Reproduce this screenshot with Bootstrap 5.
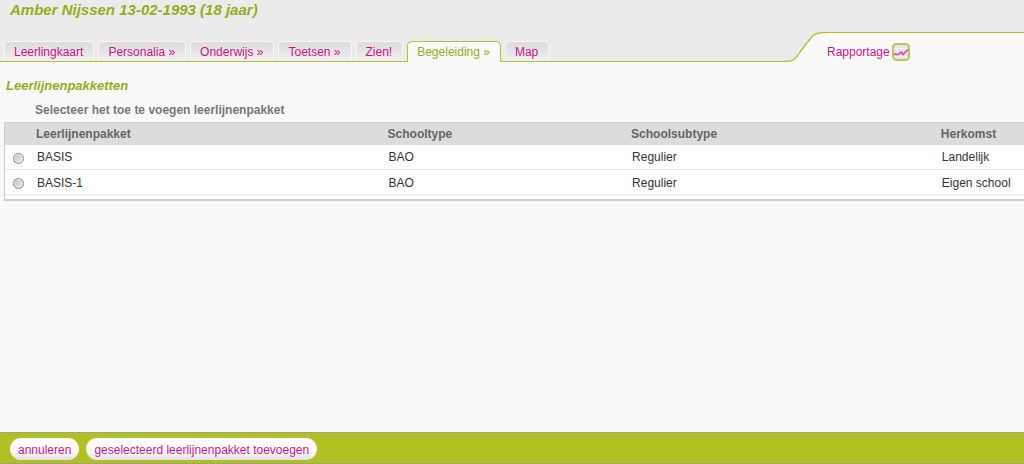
<!DOCTYPE html>
<html lang="nl">
<head>
<meta charset="utf-8">
<meta name="viewport" content="width=device-width, initial-scale=1">
<title>Leerlijnenpakketten</title>
<link href="https://cdn.jsdelivr.net/npm/bootstrap@5.3.0/dist/css/bootstrap.min.css" rel="stylesheet">
<style>
  :root { --olive: #98ab1c; --lime: #b1c32b; --pink: #c8148c; }
  body { font: 12px/16px "Liberation Sans", Arial, sans-serif; background: #f9f9f9; color: #333; }
  .pupil-head { background: #ebebeb; }
  .pupil-name { font-size: 15px; line-height: 20px; font-weight: bold; font-style: italic; color: var(--olive); height: 32px; padding-left: 10px; }
  .tab-strip { height: 30px; }
  .tab-list { border-bottom: 1px solid var(--lime); padding-left: 4px; gap: 4px; --bs-nav-link-padding-y: 0; }
  .tab-list .nav-link { height: 20px; padding: 2px 10px 0 9px; border: 1px solid #f6f6f6; border-bottom: 0; border-radius: 5px 5px 0 0; background: linear-gradient(#dcdcdc, #efefef); color: var(--pink); }
  .tab-list .nav-link.active { height: 21px; margin-bottom: -1px; border-color: var(--lime); background: #f9f9f9; color: var(--olive); }
  .report { width: 197px; border-top: 1px solid var(--lime); background: #f9f9f9; padding-top: 10px; }
  .report a { color: var(--pink); gap: 2px; }
  .page-title { font-size: 13px; line-height: 18px; font-weight: bold; font-style: italic; color: var(--olive); margin: 15px 0 0 6px; }
  .hint { font-weight: bold; color: #777; margin: 7px 0 4px 35px; }
  .packages { border: solid #ccc; border-width: 1px 0 2px 1px; background: #fff; margin-left: 4px; padding-bottom: 4px; }
  .packages table { table-layout: fixed; }
  .packages th { background: #dcdcdc; color: #666; padding: 3px 5px; }
  .packages td { padding: 4px 6px; border-bottom: 1px solid #e8e8e8; }
  .packages tr:last-child td { padding-top: 5px; padding-bottom: 3px; }
  .packages .pick { width: 26px; padding: 0; }
  .packages tbody .pick, .packages tbody tr:last-child .pick { padding: 2px 0 0 8px; }
  .pick input { appearance: none; display: block; width: 11px; height: 11px; margin: 0; border: 1px solid #8c8c8c; border-radius: 50%; background: linear-gradient(135deg, #bbb, #f4f4f4); box-shadow: inset 0 0 0 1px #eee; }
  .pick input:checked { background: radial-gradient(#444 35%, #eee 40%); }
  .actions { background: #b1c024; border: solid #a0a575; border-width: 1px 0; height: 32px; gap: 7px; padding: 1px 10px 0; }
  .actions .btn { font-size: 12px; line-height: 16px; padding: 4px 8px 2px; border: 0; border-radius: 11px; color: var(--pink); background: linear-gradient(#fff 50%, #e2e2e2); }
</style>
</head>
<body class="d-flex flex-column min-vh-100">
<header class="pupil-head">
  <div class="pupil-name">Amber Nijssen 13-02-1993 (18 jaar)</div>
  <div class="tab-strip d-flex">
    <nav class="tab-list nav flex-grow-1 flex-nowrap align-items-end" aria-label="Leerling">
      <a class="nav-link" href="#">Leerlingkaart</a>
      <a class="nav-link" href="#">Personalia »</a>
      <a class="nav-link" href="#">Onderwijs »</a>
      <a class="nav-link" href="#">Toetsen »</a>
      <a class="nav-link" href="#">Zien!</a>
      <a class="nav-link active" aria-current="page" href="#">Begeleiding »</a>
      <a class="nav-link" href="#">Map</a>
    </nav>
    <svg class="flex-shrink-0" width="45" height="30" viewBox="0 0 45 30" aria-hidden="true">
      <path d="M0 29.5H4C12 29.5 14 26 18 20L28 7C32 2 35 .5 42 .5H45V30H0Z" fill="#f9f9f9"/>
      <path d="M0 29.5H4C12 29.5 14 26 18 20L28 7C32 2 35 .5 42 .5H45" fill="none" stroke="#b1c32b" stroke-width="1.3"/>
    </svg>
    <div class="report flex-shrink-0">
      <a class="d-inline-flex align-items-center text-decoration-none" href="#">Rapportage
        <svg width="18" height="18" viewBox="0 0 18 18" aria-hidden="true">
          <rect x="1" y="1" width="16" height="16" rx="3.500" fill="#eadfe6" stroke="#b9c75a" stroke-width="2"/>
          <path d="M5.500 2V16M9.500 2V16M13.500 2V16M2 5.500H16M2 13.500H16" stroke="#f6f0f4" fill="none"/>
          <path d="M2 10.500L3.500 11.500H6.500L9 9L11 11.500L16 6.500" fill="none" stroke="#c4559b" stroke-width="1.600"/>
        </svg>
      </a>
    </div>
  </div>
</header>
<main class="flex-grow-1">
  <h1 class="page-title">Leerlijnenpakketten</h1>
  <p class="hint">Selecteer het toe te voegen leerlijnenpakket</p>
  <div class="packages">
    <table class="w-100">
      <colgroup><col style="width:26px"><col style="width:34.500%"><col style="width:23.900%"><col style="width:30.400%"><col></colgroup>
      <thead>
        <tr><th class="pick"></th><th scope="col">Leerlijnenpakket</th><th scope="col">Schooltype</th><th scope="col">Schoolsubtype</th><th scope="col">Herkomst</th></tr>
      </thead>
      <tbody>
        <tr><td class="pick"><input type="radio" name="pakket" id="p1"></td><td><label for="p1">BASIS</label></td><td>BAO</td><td>Regulier</td><td class="text-nowrap">Landelijk</td></tr>
        <tr><td class="pick"><input type="radio" name="pakket" id="p2"></td><td><label for="p2">BASIS-1</label></td><td>BAO</td><td>Regulier</td><td class="text-nowrap">Eigen school</td></tr>
      </tbody>
    </table>
  </div>
</main>
<footer class="actions d-flex align-items-center">
  <button type="button" class="btn">annuleren</button>
  <button type="button" class="btn">geselecteerd leerlijnenpakket toevoegen</button>
</footer>
<script src="https://cdn.jsdelivr.net/npm/bootstrap@5.3.0/dist/js/bootstrap.bundle.min.js"></script>
</body>
</html>
